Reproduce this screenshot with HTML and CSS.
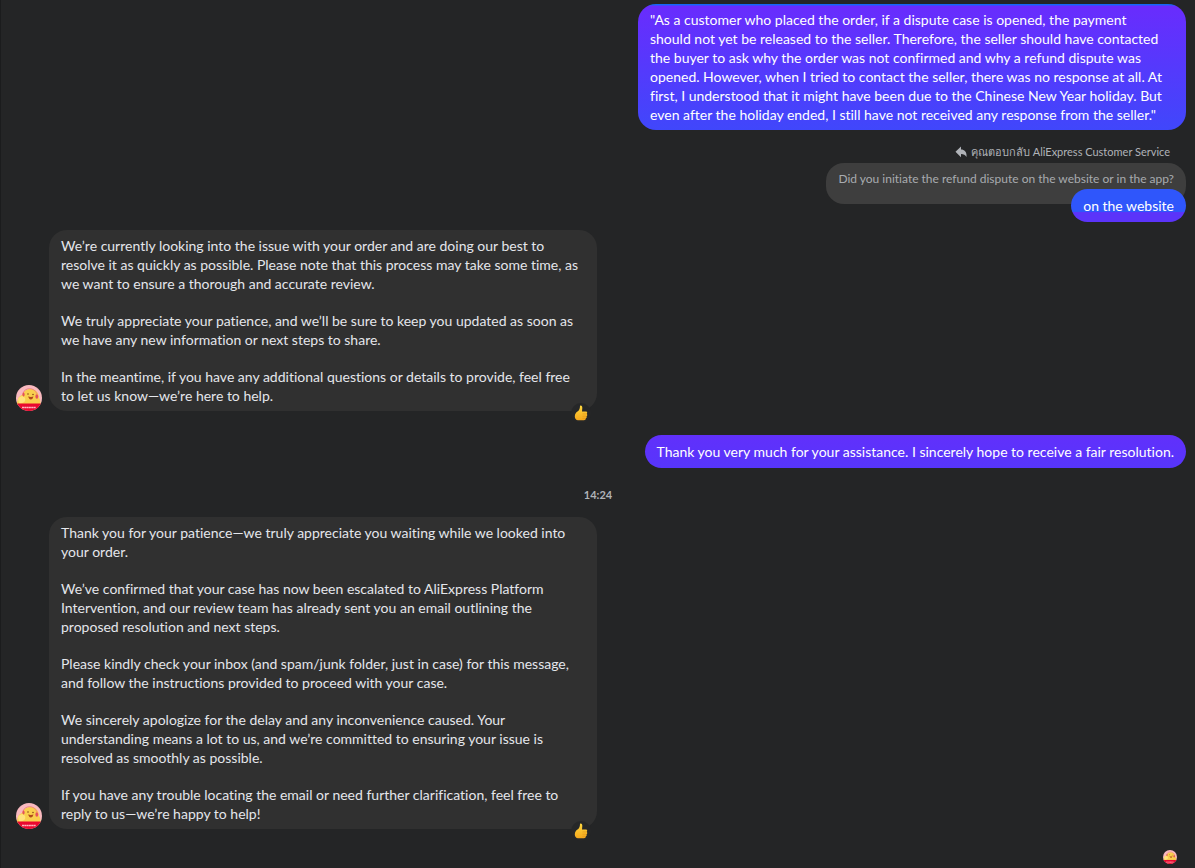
FILE: index.html
```
<!DOCTYPE html>
<html lang="en">
<head>
    <meta charset="UTF-8">
    <meta name="viewport" content="width=device-width, initial-scale=1.0">
    <title>Chat</title>
    <link rel="stylesheet" href="styles.css">
</head>
<body>
    <!-- Shared drawings -->
    <svg class="sprites" aria-hidden="true">
        <defs>
            <clipPath id="avatar-clip"><circle cx="13" cy="13" r="13"/></clipPath>
            <linearGradient id="thumb-fill" x1="0" y1="0" x2="0" y2="1">
                <stop offset="0" stop-color="#ffd83f"/>
                <stop offset="1" stop-color="#f5a81c"/>
            </linearGradient>
        </defs>
        <symbol id="avatar" viewBox="0 0 26 26">
            <g clip-path="url(#avatar-clip)">
                <rect width="26" height="26" fill="#f9b9bf"/>
                <path d="M1 20C1 14 3 11 6 10C8 5.500 11 4 15 4C20 4 23 8 23 13C24 14 25 17 24 20Z" fill="#f9cf4e"/>
                <path d="M2 14C4 10.500 7 10.500 9 13C10 16 8 18.500 3 18.500Z" fill="#ffe27c"/>
                <path d="M7 8C9 2.500 18 1.500 21 9" fill="none" stroke="#ee7880" stroke-width=".8"/>
                <ellipse cx="7.500" cy="9.500" rx="1.100" ry="1.900" fill="#e5505a"/>
                <ellipse cx="20.800" cy="11.500" rx="1.400" ry="2.300" fill="#e5505a"/>
                <circle cx="12" cy="9" r=".8" fill="#8a4a18"/>
                <circle cx="17" cy="9.500" r=".8" fill="#8a4a18"/>
                <path d="M12 11.500Q15 12.300 17.500 11.500Q16.500 15 14.500 14.500Q13 14 12 11.500Z" fill="#b04a1c"/>
                <rect y="18.500" width="26" height="8" fill="#e9092f"/>
                <path d="M6 22.500H20" stroke="#ffb4be" stroke-width="1.600" stroke-dasharray="2 .3"/>
            </g>
        </symbol>
        <symbol id="thumb" viewBox="0 0 14 16">
            <path d="M6 1C7 0 8.500 1 8.300 3L8 6.500H12C13.500 6.500 13.500 8.500 12.700 8.800C13.600 9.500 13.400 11 12.500 11.200C13 12 12.700 13.200 11.800 13.300C12 14.500 11 15.200 10 15.200H4C2 15.200 .8 13.500 .8 11.500C.8 9 2 7.500 3.500 6.500C5 5.500 6 4 6 1Z" fill="url(#thumb-fill)"/>
            <path d="M8.500 8.900H12.500M8.500 11.200H12.300M8.500 13.300H11.500" stroke="#d98a16" stroke-width=".5"/>
        </symbol>
    </svg>

    <main class="chat">
        <div class="message outgoing">
            <div class="bubble bubble-long">
                <p>"As a customer who placed the order, if a dispute case is opened, the payment<br>
                should not yet be released to the seller. Therefore, the seller should have contacted<br>
                the buyer to ask why the order was not confirmed and why a refund dispute was<br>
                opened. However, when I tried to contact the seller, there was no response at all. At<br>
                first, I understood that it might have been due to the Chinese New Year holiday. But<br>
                even after the holiday ended, I still have not received any response from the seller."</p>
            </div>
        </div>

        <div class="message outgoing reply">
            <div class="reply-label">
                <svg class="reply-icon" viewBox="0 0 12 12" aria-hidden="true"><path d="M6 .5V3.500C9.500 3.500 11.500 6 11.500 9V11C10.500 9 8.500 8 6 8V11.200L.5 5.800Z" fill="#b0b3b8"/></svg>
                <span>คุณตอบกลับ AliExpress Customer Service</span>
            </div>
            <div class="quote">Did you initiate the refund dispute on the website or in the app?</div>
            <div class="bubble bubble-line bubble-reply"><p>on the website</p></div>
        </div>

        <div class="message incoming">
            <svg class="avatar" role="img" aria-label="AliExpress"><use href="#avatar"/></svg>
            <div class="bubble">
                <p>We’re currently looking into the issue with your order and are doing our best to resolve it as quickly as possible. Please note that this process may take some time, as we want to ensure a thorough and accurate review.</p>
                <p>We truly appreciate your patience, and we’ll be sure to keep you updated as soon as we have any new information or next steps to share.</p>
                <p>In the meantime, if you have any additional questions or details to provide, feel free<br>
                to let us know—we’re here to help.</p>
                <button class="reaction" type="button" aria-label="Like"><svg><use href="#thumb"/></svg></button>
            </div>
        </div>

        <div class="message outgoing">
            <div class="bubble bubble-line"><p>Thank you very much for your assistance. I sincerely hope to receive a fair resolution.</p></div>
        </div>

        <time class="timestamp">14:24</time>

        <div class="message incoming">
            <svg class="avatar" role="img" aria-label="AliExpress"><use href="#avatar"/></svg>
            <div class="bubble">
                <p>Thank you for your patience—we truly appreciate you waiting while we looked into your order.</p>
                <p>We’ve confirmed that your case has now been escalated to AliExpress Platform Intervention, and our review team has already sent you an email outlining the proposed resolution and next steps.</p>
                <p>Please kindly check your inbox (and spam/junk folder, just in case) for this message, and follow the instructions provided to proceed with your case.</p>
                <p>We sincerely apologize for the delay and any inconvenience caused. Your understanding means a lot to us, and we’re committed to ensuring your issue is resolved as smoothly as possible.</p>
                <p>If you have any trouble locating the email or need further clarification, feel free to reply to us—we’re happy to help!</p>
                <button class="reaction" type="button" aria-label="Like"><svg><use href="#thumb"/></svg></button>
            </div>
        </div>

        <svg class="seen" role="img" aria-label="Seen"><use href="#avatar"/></svg>
    </main>
</body>
</html>
```
FILE: styles.css
```
* {
    margin: 0;
    padding: 0;
    box-sizing: border-box;
}

body {
    background: #242526;
    color: #e4e6eb;
    font-family: Lato, "Noto Sans", sans-serif;
    font-size: 14px;
    font-variant-ligatures: none;
    line-height: 19px;
}

.sprites {
    position: absolute;
    width: 0;
    height: 0;
}

.chat {
    display: flex;
    flex-direction: column;
    min-height: 100vh;
    padding: 4px 9px 4px 15px;
    border-left: 1px solid #1b1c1d;
}

.message {
    display: flex;
}

.outgoing {
    justify-content: flex-end;
}

.incoming {
    align-items: flex-end;
    gap: 7px;
    margin-top: 8px;
}

.bubble {
    position: relative;
    max-width: 548px;
    padding: 6px 12px;
    border-radius: 18px;
    background: #303030;
}

.bubble p + p {
    margin-top: 18px;
}

.outgoing .bubble {
    color: #fff;
    background: linear-gradient(#6130fb, #5735fb);
}

.outgoing .bubble-long {
    width: 100%;
    background: linear-gradient(#1467f5 1px, #692cfd 2px, #4047fb);
}

.outgoing .bubble-line {
    padding: 7px 12px;
}

/* Reply with the quoted message behind it */
.reply {
    flex-direction: column;
    align-items: flex-end;
    margin-top: 12px;
}

.reply-label {
    display: flex;
    align-items: center;
    gap: 4px;
    padding-right: 16px;
    margin-bottom: 2px;
    color: #b0b3b8;
    font-size: 11px;
}

.reply-icon {
    width: 12px;
    height: 12px;
}

.quote {
    padding: 6px 12px 16px;
    border-radius: 18px;
    background: #3e3e3e;
    color: #a8abaf;
    font-size: 12px;
}

.outgoing .bubble-reply {
    margin-top: -15px;
    background: linear-gradient(#2f56fb 70%, #5b34fa 70%);
}

.avatar {
    flex: none;
    width: 26px;
    height: 26px;
}

.reaction {
    position: absolute;
    right: 6px;
    bottom: -12px;
    display: flex;
    align-items: center;
    justify-content: center;
    width: 20px;
    height: 20px;
    border: 0;
    border-radius: 50%;
    background: #262728;
}

.reaction svg {
    width: 14px;
    height: 16px;
}

.incoming + .outgoing {
    margin-top: 24px;
}

.timestamp {
    align-self: center;
    margin: 17px 6px 5px 0;
    color: #b0b3b8;
    font-size: 11px;
    font-weight: 700;
}

.seen {
    align-self: flex-end;
    width: 14px;
    height: 14px;
    margin: auto 9px 0 0;
}
```
